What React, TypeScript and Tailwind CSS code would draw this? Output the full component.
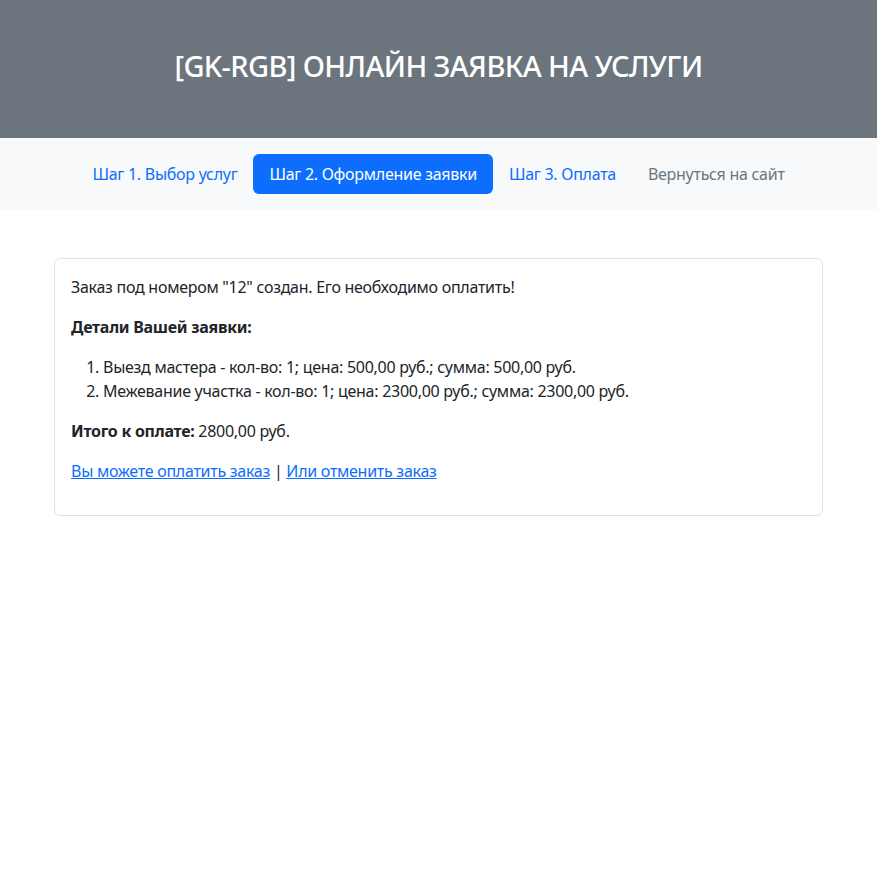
import React from "react";

export default function App() {
  const font = { fontFamily: '"Noto Sans", "Open Sans", sans-serif' };
  return (
    <div className="min-h-[896px] bg-white text-[#212529] text-[16px] leading-[24px] tracking-[-0.017em]" style={font}>
      <header className="bg-[#6c757d] pt-[48px] pb-[47px] text-center">
        <h2 className="text-white text-[29px] leading-[35px] font-medium mb-[8px] tracking-[-0.021em]">
          [GK-RGB] ОНЛАЙН ЗАЯВКА НА УСЛУГИ
        </h2>
      </header>
      <nav className="bg-[#f8f9fa] py-[16px] flex justify-center">
        <ul className="flex">
          <li><a href="#" className="block px-[16px] py-[8px] rounded-[6px] text-[#0d6efd]">Шаг 1. Выбор услуг</a></li>
          <li><a href="#" className="block px-[16px] py-[8px] rounded-[6px] bg-[#0d6efd] text-white">Шаг 2. Оформление заявки</a></li>
          <li><a href="#" className="block px-[16px] py-[8px] rounded-[6px] text-[#0d6efd]">Шаг 3. Оплата</a></li>
          <li><a href="#" className="block px-[16px] py-[8px] rounded-[6px] text-[#6c757d]">Вернуться на сайт</a></li>
        </ul>
      </nav>
      <main className="pt-[48px]">
        <div className="mx-auto w-[769px] border border-[#dee2e6] rounded-[6px] p-[16px]">
          <p className="mb-[16px]">Заказ под номером "12" создан. Его необходимо оплатить!</p>
          <p className="mb-[16px] font-bold">Детали Вашей заявки:</p>
          <ol className="list-decimal pl-[32px] mb-[16px]">
            <li>Выезд мастера - кол-во: 1; цена: 500,00 руб.; сумма: 500,00 руб.</li>
            <li>Межевание участка - кол-во: 1; цена: 2300,00 руб.; сумма: 2300,00 руб.</li>
          </ol>
          <p className="mb-[16px]"><b className="font-bold">Итого к оплате:</b> 2800,00 руб.</p>
          <p className="mb-[16px]">
            <a href="#" className="text-[#0d6efd] underline">Вы можете оплатить заказ</a> | <a href="#" className="text-[#0d6efd] underline">Или отменить заказ</a>
          </p>
        </div>
      </main>
    </div>
  );
}
